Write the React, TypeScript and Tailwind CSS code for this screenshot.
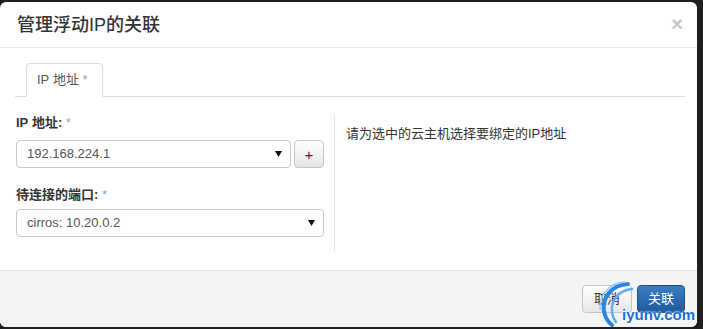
import React from "react";

function Arrow() {
  return (
    <svg width="7" height="6" viewBox="0 0 7 6" className="block">
      <polygon points="0,0 7,0 3.5,6" fill="#111" />
    </svg>
  );
}

function Select({ value, className }: { value: string; className: string }) {
  return (
    <div
      className={`h-[28px] border border-[#c8c8c8] rounded-[4px] bg-white flex items-center justify-between pl-[10px] pr-[8px] text-[13px] text-[#555] ${className}`}
    >
      <span>{value}</span>
      <Arrow />
    </div>
  );
}

export default function App() {
  return (
    <div className="w-[703px] h-[329px] bg-[#1f1f1f] overflow-hidden font-['Liberation_Sans','Noto_Sans_CJK_SC',sans-serif] relative">
      <div className="mt-[2px] w-[697px] h-[325px] bg-white rounded-[6px] flex flex-col overflow-hidden">
        {/* header */}
        <div className="h-[46px] border-b border-[#e5e5e5] flex items-center justify-between pl-[17px] pr-[14px] shrink-0">
          <div className="text-[18px] font-medium text-[#333] leading-none">管理浮动IP的关联</div>
          <div className="text-[20px] font-bold text-[#c4c4c4] leading-none mt-[-2px]">×</div>
        </div>
        {/* body */}
        <div className="flex-1 pl-[15px] pr-[12px] pt-[15px]">
          <div className="border-b border-[#dddddd] h-[34px] flex pl-[11px]">
            <div className="h-[34px] w-[77px] border border-[#dddddd] border-b-white rounded-t-[4px] bg-white flex items-center pl-[10px] text-[13px] text-[#555]">
              IP&nbsp;地址&nbsp;<span className="text-[#8fa3b4]">*</span>
            </div>
          </div>
          <div className="flex pt-[18px]">
            <div className="w-[308px] ml-[1px] flex flex-col">
              <div className="h-[18px] leading-[18px] text-[13px] font-bold text-[#333] mb-[7px] -translate-y-[1px]">
                IP&nbsp;地址:&nbsp;<span className="font-normal text-[#8fa3b4]">*</span>
              </div>
              <div className="flex gap-[3px]">
                <Select value="192.168.224.1" className="w-[275px]" />
                <div className="w-[30px] h-[28px] border border-[#c4c4c4] rounded-[4px] bg-gradient-to-b from-white to-[#e6e6e6] flex items-center justify-center text-[15px] text-[#333] leading-none">
                  +
                </div>
              </div>
              <div className="h-[18px] leading-[18px] text-[13px] font-bold text-[#333] mt-[18px] mb-[5px]">
                待连接的端口:&nbsp;<span className="font-normal text-[#8fa3b4]">*</span>
              </div>
              <Select value="cirros: 10.20.0.2" className="w-[308px]" />
            </div>
            <div className="ml-[10px] w-px h-[137px] bg-[#e3e3e3]" />
            <div className="pl-[11px] pt-[10px] text-[13px] text-[#333] leading-[18px]">
              请为选中的云主机选择要绑定的IP地址
            </div>
          </div>
        </div>
        {/* footer */}
        <div className="h-[57px] shrink-0 bg-[#f4f4f4] border-t border-[#e0e0e0] flex items-start justify-end pr-[12px] pt-[14px] gap-[5px]">
          <div className="w-[50px] h-[28px] border border-[#c4c4c4] rounded-[4px] bg-gradient-to-b from-white to-[#e6e6e6] flex items-center justify-center text-[13px] text-[#333]">
            取消
          </div>
          <div className="w-[48px] h-[28px] border border-[#1d4f86] rounded-[4px] bg-gradient-to-b from-[#3b7cc2] to-[#1f5b9c] flex items-center justify-center text-[13px] text-white">
            关联
          </div>
        </div>
      </div>
      {/* watermark */}
      <div className="absolute left-[598px] top-[281px] w-[100px] h-[46px] pointer-events-none">
        <svg width="50" height="46" viewBox="0 0 50 46" className="absolute left-0 top-0">
          <path d="M30 3 C14 4 4 16 6 30 C7 36 10 41 14 44" stroke="#2a86e0" strokeWidth="4" fill="none" strokeLinecap="round" />
          <path d="M34 8 C22 9 13 18 14 30 C14 34 16 38 18 41" stroke="#5fb0f0" strokeWidth="2.5" fill="none" strokeLinecap="round" />
          <path d="M26 1 C12 2 1 14 2 28" stroke="#8fd0ff" strokeWidth="1.5" fill="none" strokeLinecap="round" />
        </svg>
        <div className="absolute left-[24px] top-[26px] text-[15px] font-bold text-[#1a6fd6] leading-[15px] [text-shadow:0_0_2px_#fff,0_0_2px_#fff]">
          iyunv.com
        </div>
      </div>
    </div>
  );
}
